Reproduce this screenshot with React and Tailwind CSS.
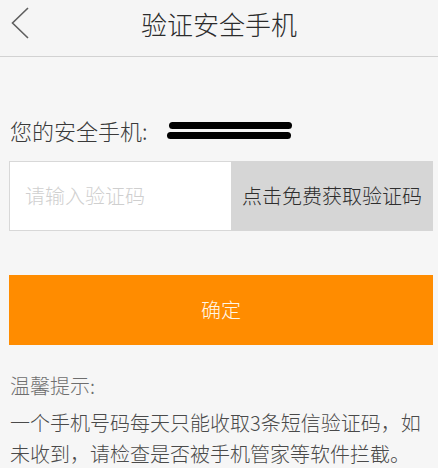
import React from "react";

const font = { fontFamily: '"Noto Sans CJK SC", "Noto Sans", sans-serif' };

export default function App() {
  return (
    <div className="min-h-[468px] w-full bg-[#f6f6f6] font-light" style={font}>
      <header className="relative flex h-[57px] items-center justify-center border-b border-[#d2d2d2] bg-[#f5f5f5] pb-[8px]">
        <svg className="absolute left-0 top-0" width="40" height="48" viewBox="0 0 40 48">
          <path d="M28 8 L12.5 23 L28 38" fill="none" stroke="#5f5f5f" strokeWidth="1.6" />
        </svg>
        <h1 className="text-[26px] leading-none text-[#2b2b2b]">验证安全手机</h1>
      </header>

      <div className="ml-[10px] mt-[58px] flex h-[30px] items-center">
        <span className="text-[22px] leading-none text-[#3a3a3a]">您的安全手机:</span>
        <span className="ml-[19px] flex flex-col gap-[3px]">
          <span className="ml-[2px] block h-[7px] w-[123px] rounded-full bg-black" />
          <span className="block h-[7px] w-[124px] rounded-full bg-black" />
        </span>
      </div>

      <div className="ml-[9px] mr-[5px] mt-[16px] flex h-[70px]">
        <div className="flex flex-1 items-center border border-r-0 border-[#d8d8d8] bg-white pl-[15px]">
          <span className="text-[20px] leading-none text-[#cfcfcf]">请输入验证码</span>
        </div>
        <div className="flex w-[202px] items-center justify-center bg-[#d6d6d6]">
          <span className="text-[20px] leading-none text-[#2e2e2e]">点击免费获取验证码</span>
        </div>
      </div>

      <button className="ml-[9px] mr-[5px] mt-[44px] flex h-[70px] w-[424px] items-center justify-center bg-[#ff8c00]">
        <span className="text-[20px] leading-none text-[#fff6e6]">确定</span>
      </button>

      <div className="ml-[10px] mr-[8px] mt-[26px]">
        <div className="text-[20px] leading-[30px] text-[#6e6e6e]">温馨提示:</div>
        <p className="mt-[6px] text-[20px] leading-[31px] text-[#4a4a4a]">
          一个手机号码每天只能收取3条短信验证码，如未收到，请检查是否被手机管家等软件拦截。
        </p>
      </div>
    </div>
  );
}
